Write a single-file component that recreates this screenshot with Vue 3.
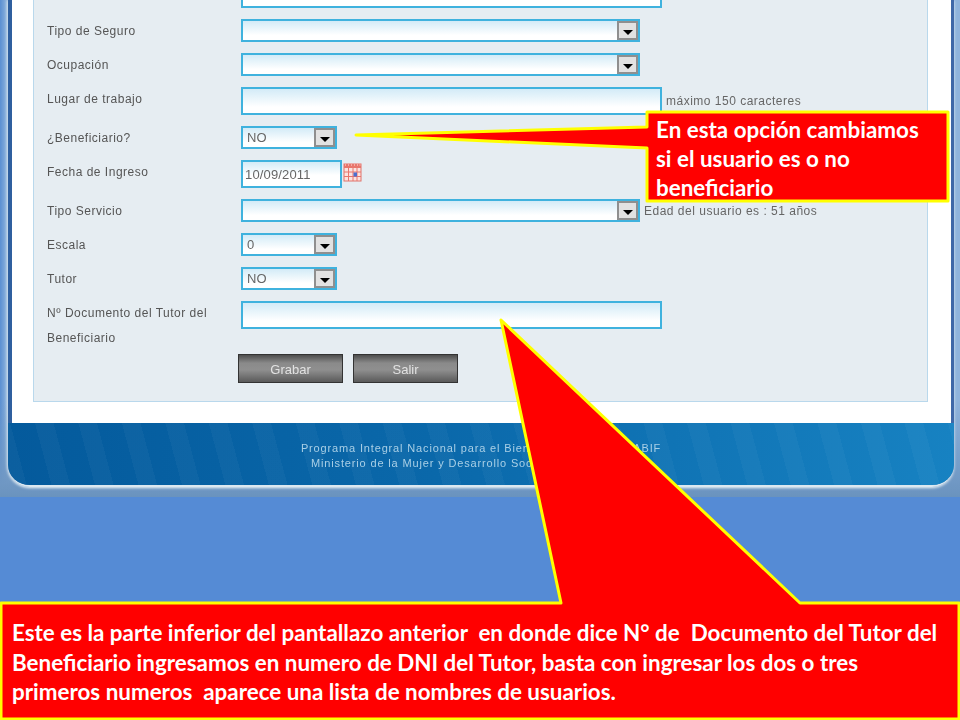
<script setup>
const sideNote = [
  'En esta opción cambiamos',
  'si el usuario es o no',
  'beneficiario'
]
const bottomNote = [
  'Este es la parte inferior del pantallazo anterior\u00a0 en donde dice N° de\u00a0 Documento del Tutor del',
  'Beneficiario ingresamos en numero de DNI del Tutor, basta con ingresar los dos o tres',
  'primeros numeros\u00a0 aparece una lista de nombres de usuarios.'
]
</script>

<template>
  <div class="stage">
    <div class="frame">
      <div class="window">
        <div class="sheet">
          <div class="panel">
            <div class="rows">
              <div class="row r-tall">
                <span class="label"></span>
                <div class="field"><div class="box tall wide"></div></div>
              </div>
              <div class="row">
                <span class="label">Tipo de Seguro</span>
                <div class="field"><div class="box select long"><span class="arrow"><i></i></span></div></div>
              </div>
              <div class="row">
                <span class="label">Ocupación</span>
                <div class="field"><div class="box select long"><span class="arrow"><i></i></span></div></div>
              </div>
              <div class="row r-tall">
                <span class="label">Lugar de trabajo</span>
                <div class="field">
                  <div class="box tall wide"></div>
                  <span class="hint">máximo 150 caracteres</span>
                </div>
              </div>
              <div class="row">
                <span class="label">¿Beneficiario?</span>
                <div class="field"><div class="box select short">NO<span class="arrow"><i></i></span></div></div>
              </div>
              <div class="row r-tall">
                <span class="label">Fecha de Ingreso</span>
                <div class="field top">
                  <div class="box tall date">10/09/2011</div>
                  <svg class="cal" width="20" height="20" viewBox="0 0 20 20">
                    <rect x="2" y="2" width="17" height="17" fill="#fbe3e0" stroke="#e0736a" />
                    <path d="M2 2h17v4H2z" fill="#e8766c" />
                    <path d="M3.500 1v3M6.500 1v3M9.500 1v3M12.500 1v3M15.500 1v3M18 1v3" stroke="#f3aaa4" />
                    <path d="M2 10h17M2 14.500h17M6.500 6v13M11 6v13M15 6v13" stroke="#e8766c" />
                    <rect x="11.500" y="10.500" width="3.500" height="4" fill="#4a6fd0" />
                  </svg>
                </div>
              </div>
              <div class="row">
                <span class="label">Tipo Servicio</span>
                <div class="field">
                  <div class="box select long"><span class="arrow"><i></i></span></div>
                  <span class="hint">Edad del usuario es : 51 años</span>
                </div>
              </div>
              <div class="row">
                <span class="label">Escala</span>
                <div class="field"><div class="box select short">0<span class="arrow"><i></i></span></div></div>
              </div>
              <div class="row">
                <span class="label">Tutor</span>
                <div class="field"><div class="box select short">NO<span class="arrow"><i></i></span></div></div>
              </div>
              <div class="row r-double">
                <span class="label">Nº Documento del Tutor del Beneficiario</span>
                <div class="field top"><div class="box tall wide"></div></div>
              </div>
            </div>
            <div class="actions">
              <button class="btn">Grabar</button>
              <button class="btn">Salir</button>
            </div>
          </div>
        </div>
        <div class="footer">
          <p>Programa Integral Nacional para el Bienestar Familiar - INABIF</p>
          <p class="line-two">Ministerio de la Mujer y Desarrollo Social</p>
        </div>
      </div>
    </div>

    <svg class="shapes" width="960" height="720" viewBox="0 0 960 720">
      <polygon points="647,112 948,112 948,201 647,201 647,148 356,135 647,127" />
      <polygon points="1,603 561,603 501,320 800,603 959,603 959,719 1,719" />
    </svg>

    <div class="note note-side">
      <div v-for="line in sideNote" :key="line">{{ line }}</div>
    </div>
    <div class="note note-bottom">
      <div v-for="line in bottomNote" :key="line">{{ line }}</div>
    </div>
  </div>
</template>

<style scoped>
.stage {
  position: relative;
  width: 960px;
  height: 720px;
  overflow: hidden;
  background: #558bd5;
  font-family: "Liberation Sans", Arial, sans-serif;
}
.frame {
  height: 497px;
  box-sizing: border-box;
  padding: 0 6px 10px 8px;
  filter: blur(0.4px);
  background:
    linear-gradient(to bottom, rgba(106, 146, 190, 0) 0, rgba(106, 146, 190, 0) 400px, #6f97c3 485px, #6a93be 497px),
    linear-gradient(to right, #5a8fd2 0, #8fb3dc 7px, #8fb3dc 100%);
}
.window {
  height: 100%;
  display: flex;
  flex-direction: column;
  overflow: hidden;
  border-radius: 0 0 22px 22px;
  border-bottom: 2px solid #dbe8f1;
  box-shadow: 0 1px 3px #dbe8f1, -1px 0 3px #c3d6e8;
  box-sizing: border-box;
}
.sheet {
  flex: 1;
  min-height: 0;
  background: #fff;
  border-left: 4px solid #2f5f9f;
  border-right: 3px solid #3f68a8;
  padding: 0 23px 21px 21px;
  display: flex;
  align-items: flex-end;
}
.panel {
  flex: 1;
  box-sizing: border-box;
  background: #e6edf2;
  border: 1px solid #b9d8ec;
  padding: 0 0 18px 13px;
}
.rows {
  display: flex;
  flex-direction: column;
  gap: 11px;
}
.row {
  display: flex;
  align-items: flex-start;
  height: 23px;
}
.r-tall {
  height: 28px;
}
.r-double {
  height: 50px;
}
.label {
  width: 194px;
  flex: none;
  padding-right: 24px;
  box-sizing: border-box;
  font-size: 12px;
  line-height: 25px;
  letter-spacing: 0.5px;
  color: #555;
}
.field {
  display: flex;
  align-items: center;
  gap: 4px;
}
.field.top {
  align-items: flex-start;
}
.box {
  position: relative;
  box-sizing: border-box;
  border: 2px solid #3fb2de;
  background: linear-gradient(to bottom, #d3ebf7 0, #fff 75%);
  height: 23px;
  font-size: 13px;
  line-height: 19px;
  color: #666;
}
.tall {
  height: 28px;
}
.wide {
  width: 421px;
}
.long {
  width: 399px;
}
.short {
  width: 96px;
  padding-left: 4px;
}
.date {
  width: 101px;
  padding-left: 2px;
  line-height: 26px;
  letter-spacing: 0.15px;
  background: linear-gradient(to bottom, #d3ebf7 0, #fff 55%);
}
.arrow {
  position: absolute;
  right: 0;
  top: 0;
  width: 21px;
  height: 19px;
  box-sizing: border-box;
  border: 2px solid #8f8f8f;
  background: #e2e2e2;
  display: flex;
  align-items: center;
  justify-content: center;
}
.arrow i {
  display: block;
  width: 0;
  height: 0;
  margin-top: 3px;
  border-left: 5px solid transparent;
  border-right: 5px solid transparent;
  border-top: 5px solid #000;
}
.cal {
  margin-top: 2px;
  margin-left: -4px;
}
.hint {
  font-size: 12px;
  letter-spacing: 0.5px;
  color: #666;
  white-space: nowrap;
}
.actions {
  display: flex;
  gap: 10px;
  margin-top: 3px;
  margin-left: 191px;
}
.btn {
  width: 105px;
  height: 29px;
  box-sizing: border-box;
  border: 1px solid #333;
  background: linear-gradient(to bottom, #4e4e4e 0, #8a8a8a 30%, #8f8f8f 55%, #5a5a5a 100%);
  color: #e2e2e2;
  font-family: "Liberation Sans", Arial, sans-serif;
  font-size: 13px;
  padding: 2px 0 0;
}
.footer {
  height: 62px;
  flex: none;
  box-sizing: border-box;
  padding-top: 4px;
  display: flex;
  flex-direction: column;
  justify-content: center;
  background:
    repeating-linear-gradient(75deg, rgba(255, 255, 255, 0.03) 0, rgba(255, 255, 255, 0.03) 18px, rgba(255, 255, 255, 0) 18px, rgba(255, 255, 255, 0) 42px),
    linear-gradient(to right, #045a9c 0, #0a68aa 45%, #1782c2 100%);
}
.footer p {
  margin: 0;
  text-align: center;
  font-size: 11px;
  line-height: 15px;
  letter-spacing: 0.85px;
  color: #a9cfe6;
}
.footer .line-two {
  text-align: left;
  padding-left: 303px;
}
.shapes {
  position: absolute;
  left: 0;
  top: 0;
}
.shapes polygon {
  fill: #f00;
  stroke: #ff0;
  stroke-width: 3;
  stroke-linejoin: round;
}
.note {
  position: absolute;
  color: #fff;
  font-family: Lato, "Liberation Sans", sans-serif;
  font-weight: 700;
  white-space: nowrap;
}
.note-side {
  left: 656px;
  top: 115px;
  font-size: 22.400px;
  line-height: 29px;
}
.note-bottom {
  left: 12px;
  top: 618px;
  font-size: 22.400px;
  line-height: 29.500px;
}
</style>

<style>
html, body { background: #558bd5; }
</style>
